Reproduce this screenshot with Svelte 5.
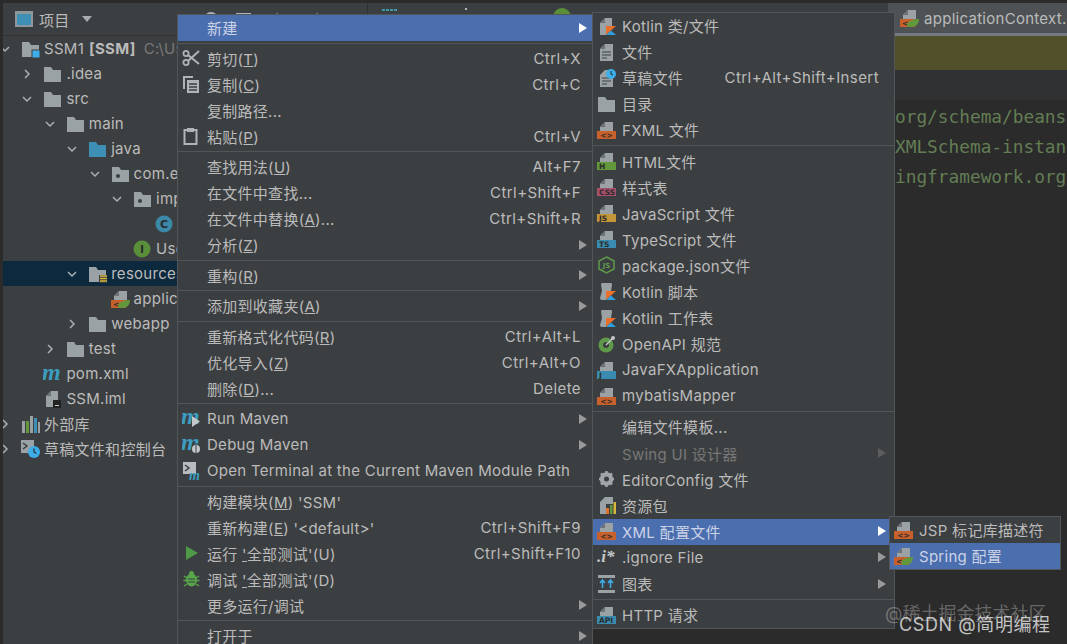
<script>
  const tree = [
    { level: 0, open: true, icon: 'module', name: 'SSM1', bold: '[SSM]', hint: 'C:\\Us' },
    { level: 1, open: false, icon: 'folder', name: '.idea' },
    { level: 1, open: true, icon: 'folder', name: 'src' },
    { level: 2, open: true, icon: 'folder', name: 'main' },
    { level: 3, open: true, icon: 'java', name: 'java' },
    { level: 4, open: true, icon: 'pkg', name: 'com.example' },
    { level: 5, open: true, icon: 'pkg', name: 'impl' },
    { level: 6, icon: 'classC', name: 'UserServiceImpl' },
    { level: 5, icon: 'classI', name: 'UserService' },
    { level: 3, open: true, icon: 'res', name: 'resources', selected: true },
    { level: 4, icon: 'spring', name: 'applicationContext.xml' },
    { level: 3, open: false, icon: 'folder', name: 'webapp' },
    { level: 2, open: false, icon: 'folder', name: 'test' },
    { level: 1, icon: 'maven', name: 'pom.xml' },
    { level: 1, icon: 'iml', name: 'SSM.iml' },
    { level: 0, open: false, icon: 'libs', name: '外部库' },
    { level: 0, open: false, icon: 'scratches', name: '草稿文件和控制台' }
  ];

  const mainMenu = [
    { label: '新建', arrow: true, active: true },
    'sep',
    { label: '剪切(_T)', key: 'Ctrl+X', icon: 'cut' },
    { label: '复制(_C)', key: 'Ctrl+C', icon: 'copy' },
    { label: '复制路径...' },
    { label: '粘贴(_P)', key: 'Ctrl+V', icon: 'paste' },
    'sep',
    { label: '查找用法(_U)', key: 'Alt+F7' },
    { label: '在文件中查找...', key: 'Ctrl+Shift+F' },
    { label: '在文件中替换(_A)...', key: 'Ctrl+Shift+R' },
    { label: '分析(_Z)', arrow: true },
    'sep',
    { label: '重构(_R)', arrow: true },
    'sep',
    { label: '添加到收藏夹(_A)', arrow: true },
    'sep',
    { label: '重新格式化代码(_R)', key: 'Ctrl+Alt+L' },
    { label: '优化导入(_Z)', key: 'Ctrl+Alt+O' },
    { label: '删除(_D)...', key: 'Delete' },
    'sep',
    { label: 'Run Maven', arrow: true, icon: 'runMaven' },
    { label: 'Debug Maven', arrow: true, icon: 'debugMaven' },
    { label: 'Open Terminal at the Current Maven Module Path', icon: 'terminal' },
    'sep',
    { label: "构建模块(_M) 'SSM'" },
    { label: "重新构建(_E) '<default>'", key: 'Ctrl+Shift+F9' },
    { label: "运行 _'全部测试'(U)", key: 'Ctrl+Shift+F10', icon: 'run' },
    { label: "调试 _'全部测试'(D)", icon: 'bug' },
    { label: '更多运行/调试', arrow: true },
    'sep',
    { label: '打开于', arrow: true }
  ];

  const newMenu = [
    { label: 'Kotlin 类/文件', icon: 'kotlinFile' },
    { label: '文件', icon: 'text' },
    { label: '草稿文件', key: 'Ctrl+Alt+Shift+Insert', icon: 'scratchFile' },
    { label: '目录', icon: 'folder' },
    { label: 'FXML 文件', icon: 'xml' },
    'sep',
    { label: 'HTML文件', icon: 'html' },
    { label: '样式表', icon: 'css' },
    { label: 'JavaScript 文件', icon: 'js' },
    { label: 'TypeScript 文件', icon: 'ts' },
    { label: 'package.json文件', icon: 'npm' },
    { label: 'Kotlin 脚本', icon: 'kotlinScript' },
    { label: 'Kotlin 工作表', icon: 'kotlinScript' },
    { label: 'OpenAPI 规范', icon: 'openapi' },
    { label: 'JavaFXApplication', icon: 'jfx' },
    { label: 'mybatisMapper', icon: 'xml' },
    'sep',
    { label: '编辑文件模板...' },
    { label: 'Swing UI 设计器', arrow: true, disabled: true },
    { label: 'EditorConfig 文件', icon: 'gear' },
    { label: '资源包', icon: 'bundle' },
    { label: 'XML 配置文件', arrow: true, active: true, icon: 'xml' },
    { label: '.ignore File', arrow: true, icon: 'ignore' },
    { label: '图表', arrow: true, icon: 'diagram' },
    'sep',
    { label: 'HTTP 请求', icon: 'api' }
  ];

  const xmlMenu = [
    { label: 'JSP 标记库描述符', icon: 'xml' },
    { label: 'Spring 配置', active: true, icon: 'spring' }
  ];

  const bands = {
    xml: ['#c8602b', '<>'],
    html: ['#62973b', 'H'],
    css: ['#a8506c', 'CSS'],
    js: ['#c3963a', 'JS'],
    ts: ['#3a8bb0', 'TS'],
    jfx: ['#3a8bb0', 'J'],
    api: ['#3a8bb0', 'API']
  };

  function parts(label) {
    const i = label.indexOf('_');
    if (i < 0) return [label, '', ''];
    return [label.slice(0, i), label[i + 1], label.slice(i + 2)];
  }
</script>

{#snippet page()}
  <path d="M3 6 8 1h8v9H3z" fill="#9aa2a6" />
  <path d="M3 6h5V1z" fill="#6c7276" />
{/snippet}

{#snippet kotlin()}
  <path d="M9 9h10l-5 4.500L9 18z" fill="#e8702a" />
  <path d="M9 18l5-4.500 5 4.500z" fill="#2f9fe0" />
{/snippet}

{#snippet icon(name)}
  <svg class="icon" viewBox="0 0 19 18" width="19" height="18">
    {#if bands[name]}
      {@render page()}
      <rect x="0" y="10" width="19" height="8" fill={bands[name][0]} />
      <text x={name === 'xml' ? 9.500 : 2} y="17" class="band" text-anchor={name === 'xml' ? 'middle' : 'start'}>{bands[name][1]}</text>
    {:else if name === 'spring'}
      {@render page()}
      <rect x="0" y="10" width="15" height="8" fill="#c8602b" />
      <text x="2" y="17" class="band">&lt;</text>
      <path d="M7 17c0-5 6-7 12-7 0 5-3 8-8 8-2 0-3 0-4-1z" fill="#62973b" />
    {:else if name === 'folder' || name === 'java' || name === 'pkg' || name === 'res' || name === 'module'}
      <path d="M1 2h7l2 3h8v12H1z" fill={name === 'java' ? '#3d8fb5' : '#9aa2a6'} />
      {#if name === 'pkg'}
        <circle cx="7" cy="11" r="2" fill="#3c3f41" />
      {/if}
      {#if name === 'res'}
        <rect x="11" y="10" width="8" height="8" fill="#3c3f41" />
        <path d="M12 11h7M12 13.500h7M12 16h7" stroke="#d7b53a" stroke-width="1.500" />
      {/if}
      {#if name === 'module'}
        <rect x="11" y="10" width="8" height="8" fill="#3daee9" stroke="#3c3f41" />
      {/if}
    {:else if name === 'classC' || name === 'classI'}
      <circle cx="9" cy="9" r="8.500" fill={name === 'classC' ? '#3b88a8' : '#5a8f3a'} />
      <text x="9" y="13" class="letter" text-anchor="middle">{name === 'classC' ? 'C' : 'I'}</text>
    {:else if name === 'maven'}
      <text x="-1" y="15" class="mvn">m</text>
    {:else if name === 'iml'}
      <path d="M3 6 8 1h7v16H3z" fill="#9aa2a6" />
      <path d="M3 6h5V1z" fill="#6c7276" />
      <rect x="10" y="10" width="8" height="8" fill="#222" />
      <rect x="12" y="15" width="4" height="1" fill="#ccc" />
    {:else if name === 'libs'}
      <path d="M1 6h3v12H1z" fill="#9aa2a6" />
      <path d="M5 6h3v12H5z" fill="#62973b" />
      <path d="M9 1h3v17H9z" fill="#9aa2a6" />
      <path d="M13 3h3v15h-3z" fill="#3d8fb5" />
      <path d="M17 7h2v11h-2z" fill="#9aa2a6" />
    {:else if name === 'scratches'}
      <rect x="0" y="0" width="13" height="13" fill="#9aa2a6" />
      <path d="M2 3l4 3-4 3" fill="none" stroke="#3c3f41" stroke-width="1.500" />
      <circle cx="13" cy="12" r="6" fill="#3daee9" />
      <path d="M13 8.500V12l2.500 1.500" fill="none" stroke="#2b2b2b" stroke-width="1.200" />
    {:else if name === 'cut'}
      <circle cx="4" cy="4.500" r="2.600" fill="none" stroke="#aeb4b8" stroke-width="1.800" />
      <circle cx="4" cy="13.500" r="2.600" fill="none" stroke="#aeb4b8" stroke-width="1.800" />
      <path d="M6 6 17 15M6 12 17 2" stroke="#aeb4b8" stroke-width="2" />
    {:else if name === 'copy'}
      <path d="M1 1h10v2H3v11H1z" fill="#aeb4b8" />
      <rect x="5" y="5" width="12" height="13" fill="#aeb4b8" />
      <path d="M7 9h8M7 12h8M7 15h8" stroke="#3c3f41" stroke-width="1.300" />
    {:else if name === 'paste'}
      <rect x="2.500" y="3" width="12" height="14" fill="none" stroke="#aeb4b8" stroke-width="2" />
      <rect x="5" y="1" width="7" height="4" fill="#aeb4b8" />
    {:else if name === 'runMaven' || name === 'debugMaven'}
      <text x="-1" y="14" class="mvn">m</text>
      {#if name === 'runMaven'}
        <path d="M10 6l8 5.500-8 5.500z" fill="#c4c8ca" />
      {:else}
        <circle cx="14" cy="13" r="4" fill="#c4c8ca" />
        <path d="M10 8h8M14 9v8" stroke="#3c3f41" />
      {/if}
    {:else if name === 'terminal'}
      <rect x="1" y="0" width="13" height="12" fill="#b8bcbe" />
      <path d="M3 3l4 3-4 3" fill="none" stroke="#3c3f41" stroke-width="1.500" />
      <text x="7" y="18" class="mvn tiny">m</text>
    {:else if name === 'run'}
      <path d="M4 2l12 7-12 7z" fill="#4e9a47" />
    {:else if name === 'bug'}
      <ellipse cx="9.500" cy="10" rx="5.500" ry="6.500" fill="#57a64a" />
      <circle cx="9.500" cy="3.500" r="2.500" fill="#57a64a" />
      <path d="M2 6l3 2M17 6l-3 2M1.500 10.500h3M17.500 10.500h-3M2 16l3-2M17 16l-3-2" stroke="#57a64a" stroke-width="1.500" />
      <path d="M6 9h7M6 12h7" stroke="#3c3f41" />
    {:else if name === 'kotlinFile'}
      <path d="M3 6 8 1h7v8H9v9H3z" fill="#9aa2a6" />
      <path d="M3 6h5V1z" fill="#6c7276" />
      {@render kotlin()}
    {:else if name === 'kotlinScript'}
      <path d="M4 2c0-1 1-1 2-1h8c1 0 1 1 1 2l-1 6H9v9H5c-1 0-2-1-2-2l2-7z" fill="#9aa2a6" />
      {@render kotlin()}
    {:else if name === 'text'}
      <path d="M3 6 8 1h8v17H3z" fill="#9aa2a6" />
      <path d="M3 6h5V1z" fill="#6c7276" />
      <path d="M5 9h9M5 12h9M5 15h5" stroke="#3c3f41" stroke-width="1.200" />
    {:else if name === 'scratchFile'}
      <path d="M3 6 8 1h8v17H3z" fill="#9aa2a6" />
      <path d="M5 9h9M5 12h9M5 15h5" stroke="#3c3f41" stroke-width="1.200" />
      <circle cx="14" cy="5" r="5" fill="#3daee9" />
      <path d="M14 2v3l2 1" fill="none" stroke="#2b2b2b" />
    {:else if name === 'npm'}
      <path d="M9.500 1 17 5v8l-7.500 4L2 13V5z" fill="none" stroke="#5f9a4a" stroke-width="1.500" />
      <text x="9.500" y="12" class="band wide" text-anchor="middle">JS</text>
    {:else if name === 'openapi'}
      <circle cx="9" cy="10" r="7.500" fill="#5f9a4a" />
      <circle cx="9" cy="10" r="3" fill="#3c3f41" />
      <path d="M9 10 16 3" stroke="#c4c8ca" stroke-width="1.500" />
      <circle cx="16" cy="3" r="2" fill="#c4c8ca" />
    {:else if name === 'gear'}
      <circle cx="9.500" cy="9" r="5" fill="none" stroke="#a0a6aa" stroke-width="3.500" />
      <path d="M9.500 1v16M2 9h15M4 3.500l11 11M15 3.500l-11 11" stroke="#a0a6aa" stroke-width="2.500" />
      <circle cx="9.500" cy="9" r="2.500" fill="#3c3f41" />
    {:else if name === 'bundle'}
      <path d="M3 6 8 1h8v7H9v10H3z" fill="#9aa2a6" />
      <rect x="9" y="12" width="3" height="6" fill="#e0702a" />
      <rect x="13" y="9" width="2.500" height="9" fill="#62973b" />
      <rect x="16.500" y="6" width="2.500" height="12" fill="#d7b53a" />
    {:else if name === 'ignore'}
      <text x="0" y="14" class="ign">.i*</text>
    {:else if name === 'diagram'}
      <rect x="1" y="0" width="17" height="3" fill="#9aa2a6" />
      <rect x="1" y="15" width="17" height="3" fill="#9aa2a6" />
      <path d="M5.500 13V6M3 8l2.500-3L8 8M13.500 13V6M11 8l2.500-3L16 8" fill="none" stroke="#3daee9" stroke-width="1.500" />
    {/if}
  </svg>
{/snippet}

{#snippet menuRows(items)}
  {#each items as item}
    {#if item === 'sep'}
      <div class="sep"></div>
    {:else}
      {@const [before, mn, after] = parts(item.label)}
      <div class="row" class:active={item.active} class:disabled={item.disabled}>
        <span class="slot">
          {#if item.icon}{@render icon(item.icon)}{/if}
        </span>
        <span class="label">{before}<u>{mn}</u>{after}</span>
        {#if item.key}<span class="key">{item.key}</span>{/if}
        {#if item.arrow}<span class="arrow"></span>{/if}
      </div>
    {/if}
  {/each}
{/snippet}

<div class="ide">
  <aside class="project">
    <div class="tool-head">
      <svg class="view-icon" viewBox="0 0 18 16" width="18" height="16">
        <rect x="0" y="0" width="18" height="16" fill="#8f979b" />
        <rect x="2" y="3" width="14" height="11" fill="#3d8fb5" />
      </svg>
      <span class="tool-title">项目</span>
      <span class="drop"></span>
      <!-- tool buttons, mostly hidden by the context menu -->
      <svg class="tool-actions" viewBox="0 0 130 16" width="130" height="16">
        <circle cx="7" cy="8" r="6" fill="none" stroke="#aeb4b8" stroke-width="2" />
        <path d="M32 3h15" stroke="#aeb4b8" stroke-width="2" />
        <path d="M70 5l3-3 3 3z" fill="#aeb4b8" />
        <path d="M92 0v16" stroke="#323232" />
        <path d="M110 5l3-3 3 3z" fill="#aeb4b8" />
      </svg>
    </div>
    <div class="tree">
      {#each tree as node}
        <div class="node" class:selected={node.selected} style="padding-left: {node.level * 22.4}px">
          <span class="twisty">
            {#if node.open === true}
              <svg viewBox="0 0 12 12" width="12" height="12"><path d="M2 4l4 4 4-4" fill="none" stroke="#aab0b4" stroke-width="1.500" /></svg>
            {:else if node.open === false}
              <svg viewBox="0 0 12 12" width="12" height="12"><path d="M4 2l4 4-4 4" fill="none" stroke="#aab0b4" stroke-width="1.500" /></svg>
            {/if}
          </span>
          {@render icon(node.icon)}
          <span class="node-name">{node.name}</span>
          {#if node.bold}<b class="node-bold">{node.bold}</b>{/if}
          {#if node.hint}<span class="node-hint">{node.hint}</span>{/if}
        </div>
      {/each}
    </div>
  </aside>

  <section class="editor">
    <div class="tabs">
      <svg class="tab-stubs" viewBox="0 0 190 16" width="190" height="16">
        <path d="M0 7h16" stroke="#3f9aa8" stroke-width="2" stroke-dasharray="3 1" />
        <rect x="83" y="5" width="2" height="2" fill="#aeb4b8" />
        <circle cx="180" cy="14" r="9" fill="#5a8f3a" />
      </svg>
      <span class="tab-active">
        {@render icon('spring')}
        <span>applicationContext.xml</span>
      </span>
    </div>
    <div class="notice"></div>
    <div class="caret-line"></div>
    <div class="code">
      <div>org/schema/beans"</div>
      <div>XMLSchema-instance"</div>
      <div>ingframework.org/</div>
    </div>
  </section>

  <div class="menu main-menu">{@render menuRows(mainMenu)}</div>
  <div class="menu new-menu">{@render menuRows(newMenu)}</div>
  <div class="menu xml-menu">{@render menuRows(xmlMenu)}</div>

  <div class="mark mark-juejin">@稀土掘金技术社区</div>
  <div class="mark mark-csdn">CSDN @简明编程</div>
</div>

<style>
  :global(body) {
    background: #2b2b2b;
  }
  .ide {
    position: relative;
    display: flex;
    width: 1067px;
    height: 644px;
    overflow: hidden;
    box-sizing: border-box;
    padding-top: 3px;
    background: #2b2b2b;
    color: #bbbbbb;
    font-family: Inter, "Noto Sans CJK SC", sans-serif;
    font-size: 15px;
    letter-spacing: 0.28px;
  }
  .project {
    width: 365px;
    margin-left: 3px;
    border-right: 1px solid #323232;
    background: #3c3f41;
    box-sizing: border-box;
    overflow: hidden;
    flex: none;
  }
  .tool-head {
    display: flex;
    align-items: center;
    height: 32px;
    padding-left: 12px;
    border-bottom: 1px solid #323232;
  }
  .tool-title {
    margin-left: 6px;
  }
  .drop {
    width: 0;
    height: 0;
    margin-left: 12px;
    border-left: 5px solid transparent;
    border-right: 5px solid transparent;
    border-top: 6px solid #a7acaf;
  }
  .tool-actions {
    margin-left: 112px;
    flex: none;
  }
  .tree {
    white-space: nowrap;
  }
  .node {
    display: flex;
    align-items: center;
    height: 25px;
  }
  .node.selected {
    background: #0d293e;
  }
  .twisty {
    display: flex;
    align-items: center;
    justify-content: center;
    width: 18px;
    margin-left: -7px;
    margin-right: 7px;
    flex: none;
  }
  .node-name {
    margin-left: 4px;
  }
  .node-bold {
    margin-left: 5px;
  }
  .node-hint {
    margin-left: 8px;
    color: #787878;
  }
  .icon {
    flex: none;
    display: block;
  }
  .band {
    font-family: "DejaVu Sans", sans-serif;
    font-size: 7.500px;
    font-weight: 700;
    letter-spacing: 0;
    fill: #2b2b2b;
  }
  .band.wide {
    font-size: 7px;
    fill: #5f9a4a;
  }
  .letter {
    font-family: "DejaVu Sans", sans-serif;
    font-size: 11px;
    font-weight: 700;
    letter-spacing: 0;
    fill: #2b2b2b;
  }
  .mvn {
    font-family: "Liberation Serif", serif;
    font-style: italic;
    font-weight: 700;
    font-size: 24px;
    letter-spacing: 0;
    fill: #3d9dc0;
  }
  .mvn.tiny {
    font-size: 14px;
  }
  .ign {
    font-family: "Liberation Serif", serif;
    font-style: italic;
    font-weight: 700;
    font-size: 17px;
    letter-spacing: 0;
    fill: #c4c8ca;
  }
  .editor {
    flex: 1;
    min-width: 0;
    overflow: hidden;
  }
  .tabs {
    display: flex;
    align-items: flex-start;
    justify-content: space-between;
    height: 33px;
    background: #3c3f41;
  }
  .tab-stubs {
    margin: 0 0 0 14px;
    flex: none;
  }
  .tab-active {
    display: flex;
    align-items: center;
    gap: 5px;
    width: 179px;
    height: 33px;
    flex: none;
    box-sizing: border-box;
    padding-left: 12px;
    background: #4e5254;
    border-bottom: 3px solid #747a83;
    white-space: nowrap;
    overflow: hidden;
  }
  .notice {
    height: 34px;
    background: #52502b;
  }
  .caret-line {
    height: 30px;
    background: #2f3133;
  }
  .code {
    padding: 2px 0 0 527px;
    color: #637d54;
    font-family: "DejaVu Sans Mono", monospace;
    font-size: 17.800px;
    letter-spacing: 0;
    line-height: 30px;
    white-space: nowrap;
  }
  .menu {
    position: absolute;
    box-sizing: border-box;
    background: #3c3f41;
    border: 1px solid #515658;
    white-space: nowrap;
  }
  .main-menu {
    left: 177px;
    top: 14px;
    width: 416px;
    height: 660px;
  }
  .main-menu .sep {
    height: 4.500px;
  }
  .new-menu {
    left: 592px;
    top: 12px;
    width: 303px;
  }
  .new-menu .row {
    height: 26.100px;
    padding-right: 15px;
  }
  .new-menu .arrow {
    margin-right: -7px;
  }
  .new-menu .sep {
    height: 5px;
  }
  .xml-menu {
    left: 889px;
    top: 516px;
    width: 172px;
  }
  .row {
    display: flex;
    align-items: center;
    box-sizing: border-box;
    height: 26px;
    padding: 0 11px 1px 4px;
  }
  .row.active {
    background: #4b6eaf;
    color: #ccd3e6;
  }
  .row.disabled {
    color: #777777;
  }
  .slot {
    width: 19px;
    height: 18px;
    margin-right: 6px;
    flex: none;
  }
  .label {
    flex: 1;
  }
  .key {
    margin-left: 20px;
    letter-spacing: 0.42px;
  }
  .arrow {
    width: 0;
    height: 0;
    margin-right: -6px;
    border-top: 5.500px solid transparent;
    border-bottom: 5.500px solid transparent;
    border-left: 8px solid #9a9a9a;
  }
  .row.active .arrow {
    border-left-color: #ffffff;
  }
  .row.disabled .arrow {
    border-left-color: #5d5d5d;
  }
  .sep {
    display: flex;
    align-items: center;
  }
  .sep::after {
    content: "";
    flex: 1;
    height: 1px;
    background: #515658;
  }
  .mark {
    position: absolute;
    white-space: nowrap;
    font-size: 18px;
    letter-spacing: 0;
  }
  .mark-juejin {
    left: 885px;
    top: 599px;
    color: rgba(220, 220, 220, 0.35);
  }
  .mark-csdn {
    left: 899px;
    top: 610px;
    letter-spacing: 0.6px;
    color: rgba(255, 255, 255, 0.72);
  }
</style>
